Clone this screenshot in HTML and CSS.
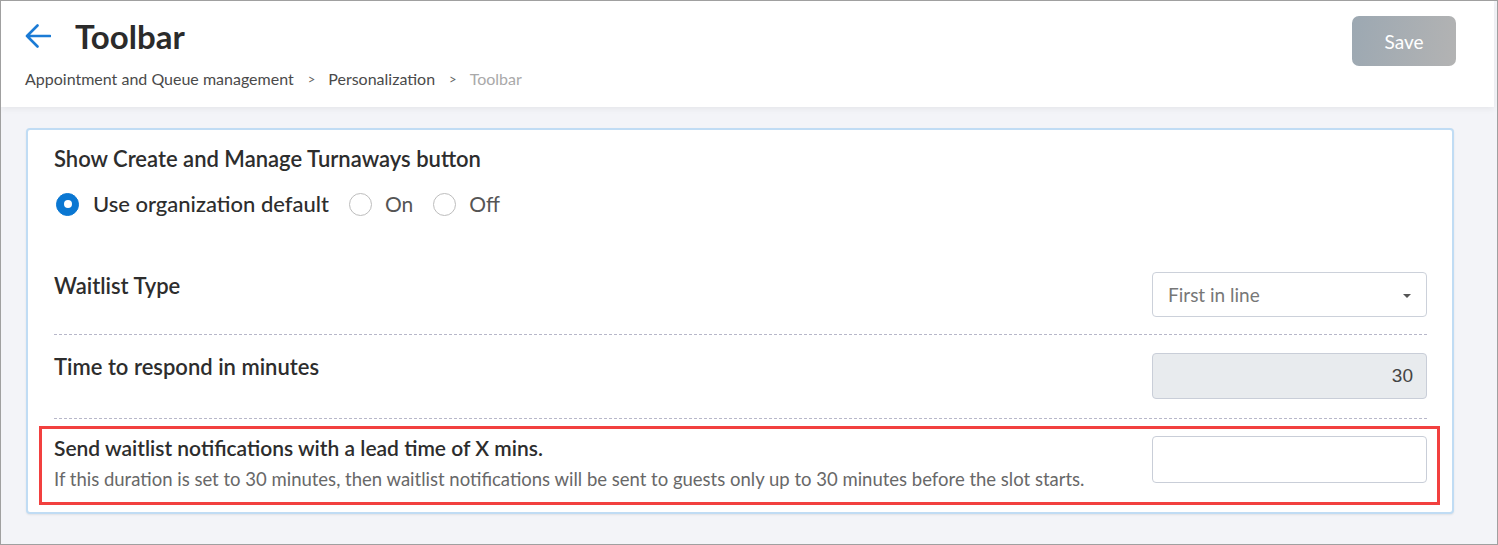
FILE: index.html
```html
<!DOCTYPE html>
<html lang="en">
<head>
<meta charset="utf-8">
<title>Toolbar</title>
<link rel="stylesheet" href="styles.css">
</head>
<body>
<div class="frame">
  <header class="header">
    <div class="head-left">
      <div class="title-row">
        <svg class="back" width="26" height="26" viewBox="0 0 26 26" aria-hidden="true">
          <path d="M12.5 2.5 L2 13 L12.5 23.5 M2 13 H25" fill="none" stroke="#1b7bd5" stroke-width="2.6" stroke-linecap="round" stroke-linejoin="round"/>
        </svg>
        <h1 class="title">Toolbar</h1>
      </div>
      <nav class="crumbs">
        <span class="crumb">Appointment and Queue management</span>
        <span class="sep">&gt;</span>
        <span class="crumb">Personalization</span>
        <span class="sep">&gt;</span>
        <span class="crumb current">Toolbar</span>
      </nav>
    </div>
    <button class="save" type="button">Save</button>
  </header>

  <main class="main">
    <section class="card">
      <div class="block">
        <div class="label">Show Create and Manage Turnaways button</div>
        <div class="radios">
          <span class="radio on"></span><span class="radio-label strong">Use organization default</span>
          <span class="radio"></span><span class="radio-label">On</span>
          <span class="radio"></span><span class="radio-label">Off</span>
        </div>
      </div>

      <div class="row first-row">
        <div class="label">Waitlist Type</div>
        <div class="select">
          <span class="select-text">First in line</span>
          <span class="caret"></span>
        </div>
      </div>

      <div class="row second-row">
        <div class="label">Time to respond in minutes</div>
        <div class="input disabled">30</div>
      </div>

      <div class="row highlight">
        <div class="text-col">
          <div class="label small">Send waitlist notifications with a lead time of X mins.</div>
          <div class="desc">If this duration is set to 30 minutes, then waitlist notifications will be sent to guests only up to 30 minutes before the slot starts.</div>
        </div>
        <div class="input lead"></div>
      </div>
    </section>
  </main>
</div>
</body>
</html>
```

FILE: styles.css
```css
* { box-sizing: border-box; }

html, body {
  margin: 0;
  padding: 0;
}

body {
  font-family: "Lato", "Open Sans", Arial, sans-serif;
  color: #2e2e2e;
  background: #ffffff;
}

.frame {
  width: 1498px;
  height: 545px;
  border: 1px solid #a0a0a0;
  background: #f3f4f8;
  overflow: hidden;
}

/* ---------- header ---------- */
.header {
  height: 106px;
  margin-right: 3px;
  background: #ffffff;
  display: flex;
  justify-content: space-between;
  align-items: flex-start;
  padding: 15px 38px 0 24px;
  box-shadow: 0 2px 6px rgba(0, 0, 0, 0.06);
  position: relative;
  z-index: 1;
}

.title-row {
  display: flex;
  align-items: center;
  height: 40px;
}

.back {
  display: block;
  flex: none;
}

.title {
  margin: 0 0 0 24px;
  font-size: 33px;
  line-height: 40px;
  font-weight: 700;
  color: #2b2b2b;
}

.crumbs {
  margin-top: 12px;
  display: flex;
  align-items: center;
  font-size: 16px;
  line-height: 22px;
  color: #4a4a4a;
}

.sep {
  font-size: 13px;
  color: #666666;
  margin: 0 13px 0 14px;
}

.crumb.current {
  color: #a9a9a9;
}

.save {
  width: 104px;
  height: 50px;
  border: none;
  border-radius: 7px;
  background: linear-gradient(100deg, #9ca8b2 0%, #b3b3b3 100%);
  color: #ffffff;
  font-family: "Lato", Arial, sans-serif;
  font-size: 19px;
  padding: 0;
}

/* ---------- content ---------- */
.main {
  padding: 21px 43px 0 25px;
}

.card {
  background: #ffffff;
  border: 2px solid #c0dcf4;
  border-radius: 4px;
  padding: 15px 25px 7px 26px;
  box-shadow: 0 1px 2px rgba(0, 0, 0, 0.08);
}

.label {
  font-size: 22px;
  line-height: 28px;
  font-weight: 600;
  color: #2d2d2d;
}

.label.small {
  font-size: 21px;
}

.radios {
  margin-top: 17px;
  display: flex;
  align-items: center;
  padding-left: 2px;
  height: 28px;
}

.radio {
  width: 23px;
  height: 23px;
  border-radius: 50%;
  border: 1px solid #bdbdbd;
  background: #ffffff;
  flex: none;
  display: flex;
  align-items: center;
  justify-content: center;
}

.radio.on {
  background: #0a77d2;
  border-color: #0a77d2;
}

.radio.on::after {
  content: "";
  width: 8px;
  height: 8px;
  border-radius: 50%;
  background: #ffffff;
}

.radio-label {
  margin: 0 20px 0 13px;
  font-size: 21px;
  line-height: 28px;
  color: #555555;
}

.radio-label.strong {
  font-size: 22px;
  font-weight: 500;
  color: #2d2d2d;
  margin-left: 14px;
}

.row {
  display: flex;
  justify-content: space-between;
  align-items: flex-start;
}

.first-row {
  margin-top: 54px;
  padding-bottom: 17px;
  border-bottom: 1px dashed #b7b7c9;
}

.second-row {
  padding-top: 18px;
  padding-bottom: 19px;
  border-bottom: 1px dashed #b7b7c9;
}

.select {
  width: 275px;
  height: 45px;
  border: 1px solid #ccd1da;
  border-radius: 4px;
  background: #ffffff;
  display: flex;
  align-items: center;
  justify-content: space-between;
  padding: 0 15px 0 15px;
  flex: none;
}

.select-text {
  font-size: 19px;
  color: #777777;
}

.caret {
  width: 0;
  height: 0;
  border-left: 4.5px solid transparent;
  border-right: 4.5px solid transparent;
  border-top: 4px solid #555555;
  margin-top: 2px;
}

.input {
  width: 275px;
  height: 46px;
  border: 1px solid #c9ced8;
  border-radius: 4px;
  background: #ffffff;
  flex: none;
}

.input.disabled {
  background: #e8ebee;
  display: flex;
  align-items: center;
  justify-content: flex-end;
  padding-right: 13px;
  font-family: "Liberation Sans", Arial, sans-serif;
  font-size: 19px;
  color: #444444;
}

.highlight {
  margin: 7px -13px 0 -15px;
  border: 3px solid #f2403f;
  padding: 5px 10px 11px 12px;
}

.input.lead {
  margin-top: 2px;
  height: 47px;
}

.desc {
  margin-top: 5px;
  font-size: 18.5px;
  line-height: 24px;
  color: #686868;
}
```
